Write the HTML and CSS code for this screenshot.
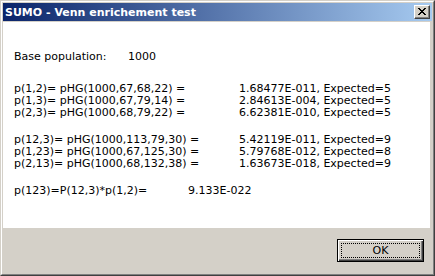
FILE: index.html
```html
<!DOCTYPE html>
<html lang="en">
<head>
    <meta charset="UTF-8">
    <title>SUMO - Venn enrichement test</title>
    <link rel="stylesheet" href="styles.css">
</head>
<body>
    <div class="window">
        <div class="frame">
            <div class="titlebar">
                <span class="title">SUMO - Venn enrichement test</span>
                <button class="close-button" aria-label="Close">
                    <svg width="8" height="7" viewBox="0 0 8 7" shape-rendering="crispEdges">
                        <path d="M0 0h2v1H0zM6 0h2v1H6zM1 1h2v1H1zM5 1h2v1H5zM2 2h4v1H2zM3 3h2v1H3zM2 4h4v1H2zM1 5h2v1H1zM5 5h2v1H5zM0 6h2v1H0zM6 6h2v1H6z" fill="#000"/>
                    </svg>
                </button>
            </div>
            <div class="client">
                <div class="report">
                    <div class="group">
                        <div class="row base"><span class="label">Base population:</span><span>1000</span></div>
                    </div>
                    <div class="group first">
                        <div class="row"><span class="label">p(1,2)= pHG(1000,67,68,22) =</span><span>1.68477E-011, Expected=5</span></div>
                        <div class="row"><span class="label">p(1,3)= pHG(1000,67,79,14) =</span><span>2.84613E-004, Expected=5</span></div>
                        <div class="row"><span class="label">p(2,3)= pHG(1000,68,79,22) =</span><span>6.62381E-010, Expected=5</span></div>
                    </div>
                    <div class="group second">
                        <div class="row"><span class="label">p(12,3)= pHG(1000,113,79,30) =</span><span>5.42119E-011, Expected=9</span></div>
                        <div class="row"><span class="label">p(1,23)= pHG(1000,67,125,30) =</span><span>5.79768E-012, Expected=8</span></div>
                        <div class="row"><span class="label">p(2,13)= pHG(1000,68,132,38) =</span><span>1.63673E-018, Expected=9</span></div>
                    </div>
                    <div class="group last">
                        <div class="row total"><span class="label">p(123)=P(12,3)*p(1,2)=</span><span>9.133E-022</span></div>
                    </div>
                </div>
                <div class="footer">
                    <button class="ok-button"><span class="focus">OK</span></button>
                </div>
            </div>
        </div>
    </div>
</body>
</html>
```

FILE: styles.css
```css
body {
    margin: 0;
    font-family: 'DejaVu Sans', Verdana, sans-serif;
    font-size: 11px;
    color: #000;
    background: #d4d0c8;
}

.window {
    width: 435px;
    height: 276px;
    box-sizing: border-box;
    border: 1px solid;
    border-color: #d4d0c8 #404040 #404040 #d4d0c8;
}

.frame {
    height: 100%;
    box-sizing: border-box;
    border: 1px solid;
    border-color: #fff #808080 #808080 #fff;
    padding: 1px;
    background: #d4d0c8;
    display: flex;
    flex-direction: column;
}

.titlebar {
    height: 18px;
    margin-bottom: 1px;
    display: flex;
    align-items: center;
    justify-content: space-between;
    padding: 0 2px;
    background: linear-gradient(to right, #0a246a, #a6caf0);
}

.title {
    color: #fff;
    font-weight: bold;
    white-space: nowrap;
}

.close-button {
    width: 16px;
    height: 14px;
    padding: 0;
    box-sizing: border-box;
    background: #d4d0c8;
    border: 1px solid;
    border-color: #fff #404040 #404040 #fff;
    box-shadow: inset -1px -1px 0 #808080;
    display: flex;
    align-items: center;
    justify-content: center;
}

.close-button svg {
    display: block;
    margin: 0 1px 1px 0;
}

.client {
    flex: 1;
    display: flex;
    flex-direction: column;
}

.report {
    height: 206px;
    background: #fff;
    padding: 29px 0 0 11px;
    box-sizing: border-box;
    margin-right: 2px;
}

.row {
    display: flex;
    line-height: 12px;
    white-space: nowrap;
}

.label {
    width: 225px;
}

.base .label {
    width: 114px;
}

.total .label {
    width: 174px;
}

.group.first {
    margin-top: 20px;
}

.group.second {
    margin-top: 15px;
}

.group.last {
    margin-top: 15px;
}

.footer {
    flex: 1;
    display: flex;
    justify-content: flex-end;
    align-items: flex-start;
    padding: 11px 8px 0 0;
}

.ok-button {
    width: 87px;
    height: 23px;
    box-sizing: border-box;
    font: inherit;
    color: #000;
    background: #d4d0c8;
    border: 1px solid #000;
    box-shadow: inset 1px 1px 0 #fff, inset -1px -1px 0 #404040, inset -2px -2px 0 #808080;
    display: flex;
    padding: 3px;
}

.focus {
    flex: 1;
    border: 1px dotted #000;
    display: flex;
    align-items: center;
    justify-content: center;
}
```
